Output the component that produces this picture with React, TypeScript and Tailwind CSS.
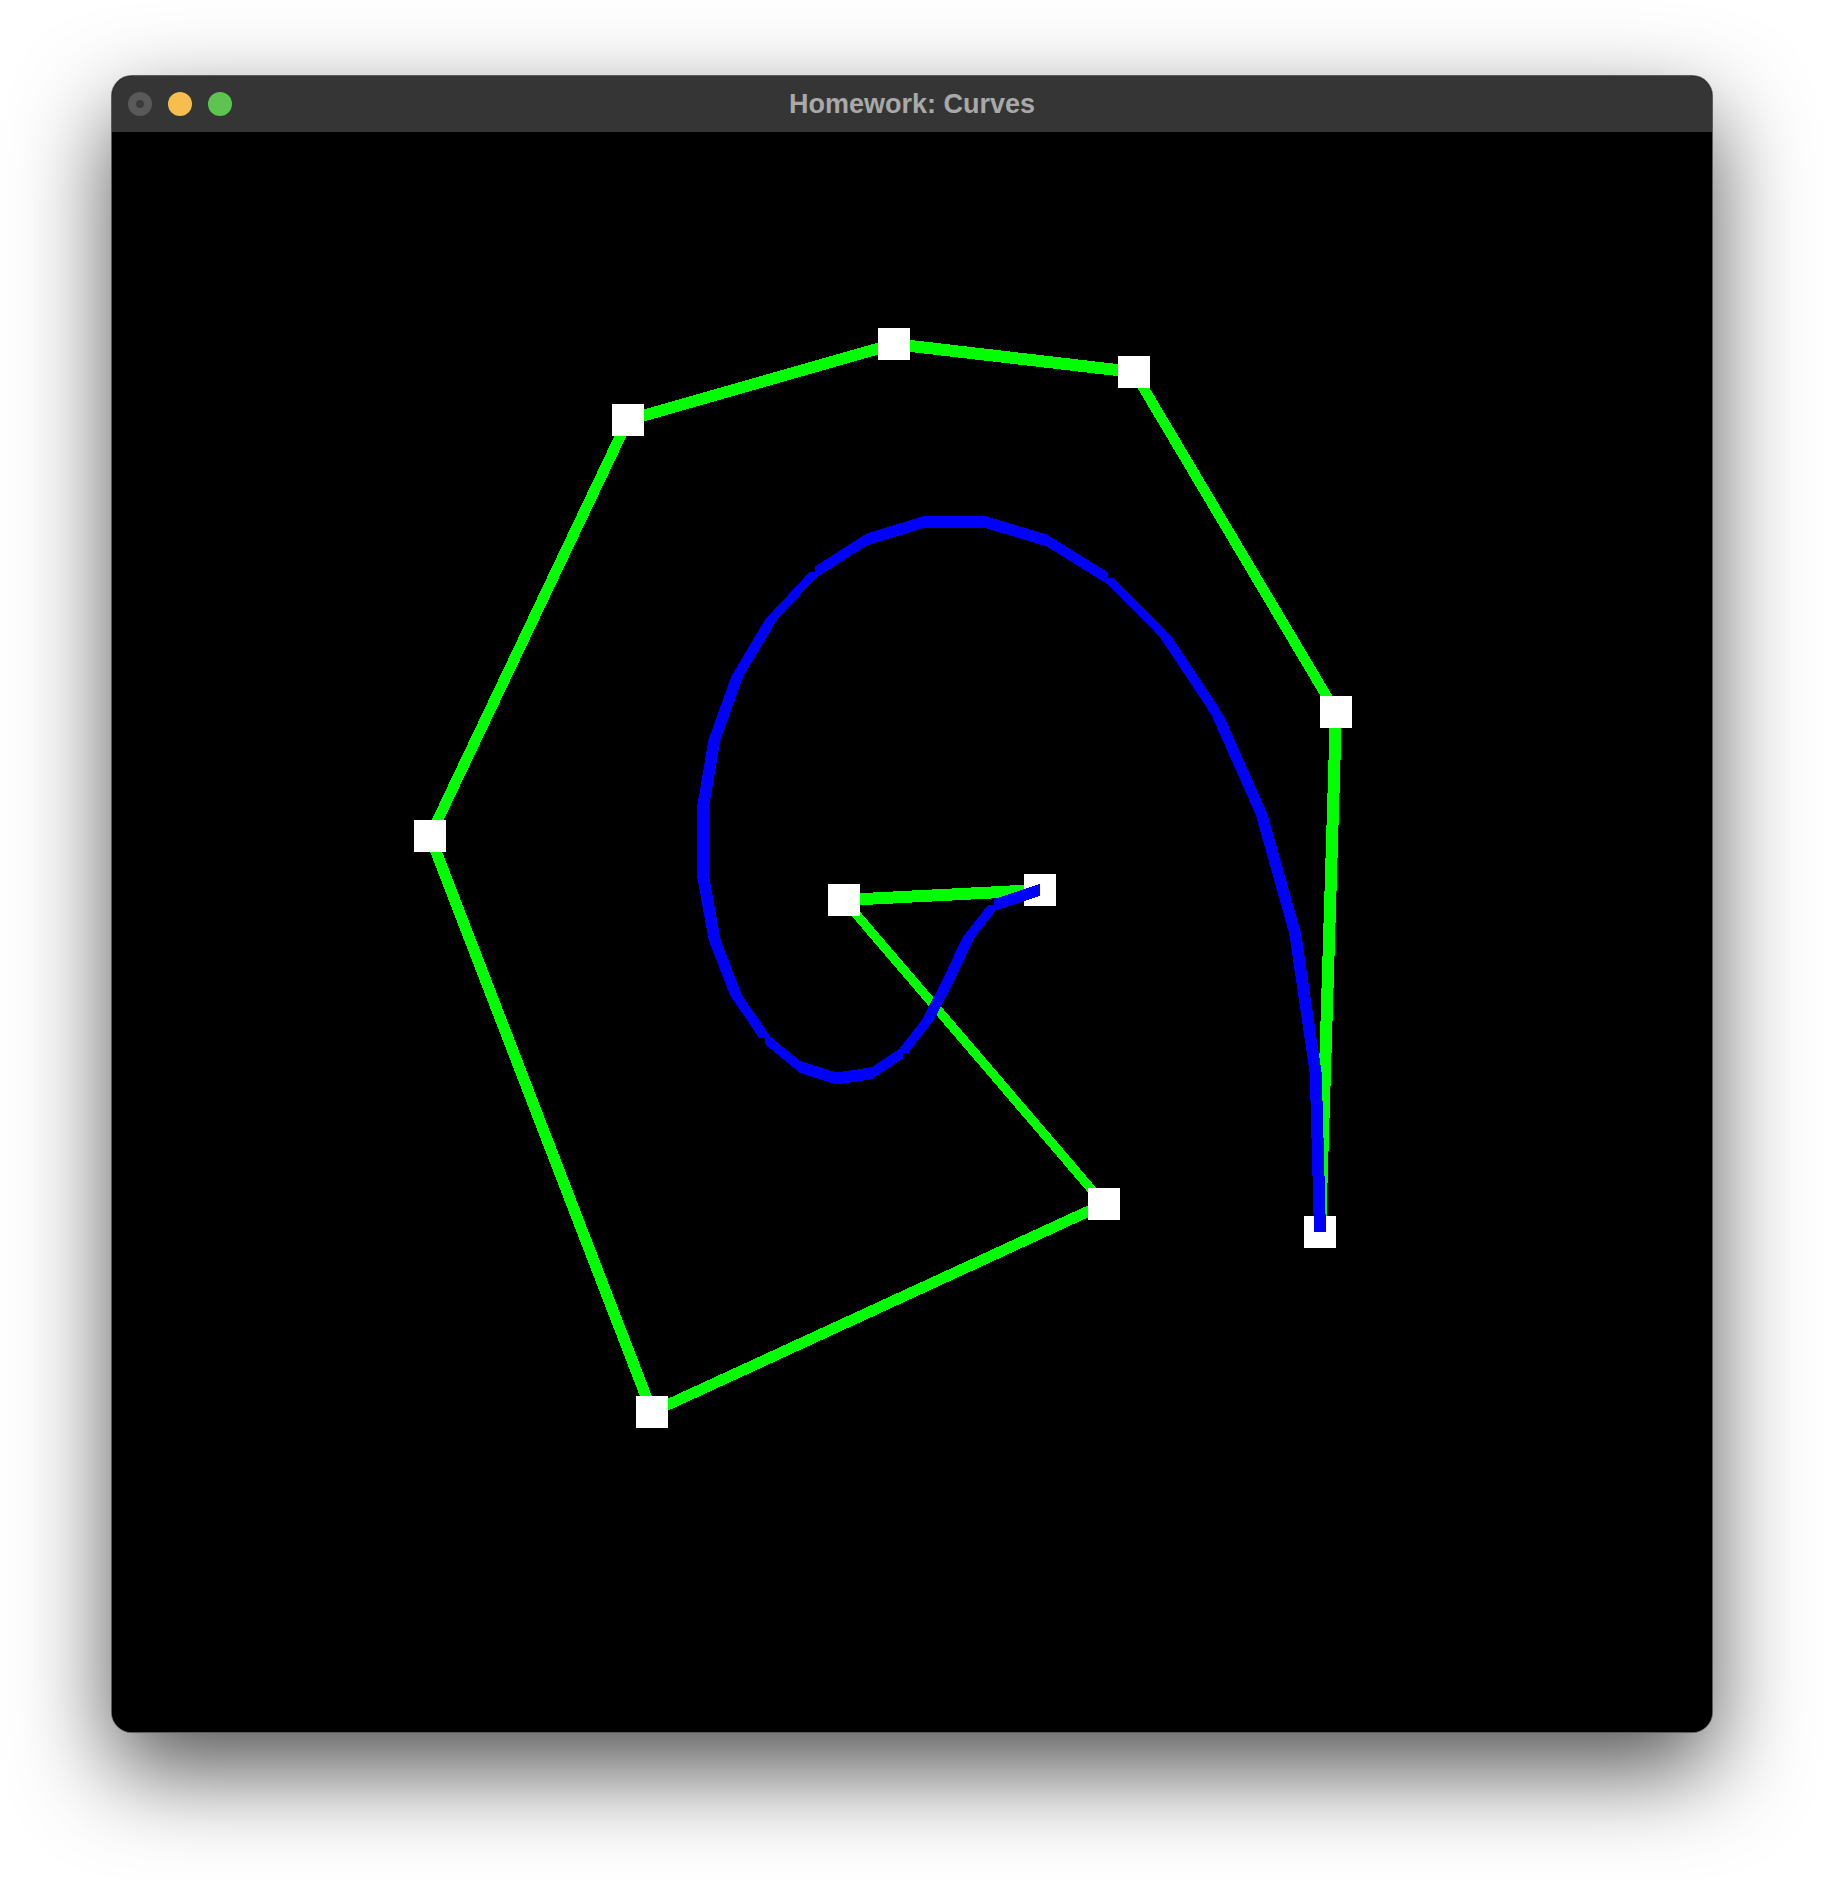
import React from "react";

// control points in canvas pixels (canvas is 1600x1600)
const points: [number, number][] = [
  [928, 758],
  [732, 768],
  [992, 1072],
  [540, 1280],
  [318, 704],
  [516, 288],
  [782, 212],
  [1022, 240],
  [1224, 580],
  [1208, 1100],
];

const STEPS = 28;
const LINE = 12;
const BOX = 32;

function bezier(pts: [number, number][], t: number): [number, number] {
  let work = pts.map((p) => [p[0], p[1]] as [number, number]);
  while (work.length > 1) {
    const next: [number, number][] = [];
    for (let i = 0; i < work.length - 1; i++) {
      next.push([
        work[i][0] + (work[i + 1][0] - work[i][0]) * t,
        work[i][1] + (work[i + 1][1] - work[i][1]) * t,
      ]);
    }
    work = next;
  }
  return work[0];
}

// wide aliased line like glLineWidth: thickness taken along the minor axis
function band(a: [number, number], b: [number, number], w = LINE) {
  const [x1, y1] = a;
  const [x2, y2] = b;
  const h = w / 2;
  if (Math.abs(x2 - x1) >= Math.abs(y2 - y1)) {
    return `${x1},${y1 - h} ${x2},${y2 - h} ${x2},${y2 + h} ${x1},${y1 + h}`;
  }
  return `${x1 - h},${y1} ${x2 - h},${y2} ${x2 + h},${y2} ${x1 + h},${y1}`;
}

const curve = Array.from({ length: STEPS + 1 }, (_, i) => bezier(points, i / STEPS));

function Canvas() {
  return (
    <svg width={1600} height={1600} viewBox="0 0 1600 1600" className="block bg-black" shapeRendering="crispEdges">
      {points.slice(1).map((p, i) => (
        <polygon key={`g${i}`} points={band(points[i], p)} fill="#00ff00" />
      ))}
      {points.map(([x, y], i) => (
        <rect key={`s${i}`} x={x - BOX / 2} y={y - BOX / 2} width={BOX} height={BOX} fill="#ffffff" />
      ))}
      {curve.slice(1).map((p, i) => (
        <polygon key={`b${i}`} points={band(curve[i], p)} fill="#0000ff" />
      ))}
    </svg>
  );
}

function TitleBar() {
  return (
    <div className="relative flex h-[56px] items-center justify-center bg-[#353535]">
      <div className="absolute left-[16px] top-[16px] flex gap-[16px]">
        <div className="flex h-[24px] w-[24px] items-center justify-center rounded-full bg-[#595959]">
          <div className="h-[8px] w-[8px] rounded-full bg-[#3b3b3b]" />
        </div>
        <div className="h-[24px] w-[24px] rounded-full bg-[#f5be4f]" />
        <div className="h-[24px] w-[24px] rounded-full bg-[#5ec451]" />
      </div>
      <span className="text-[27px] font-bold text-[#a9a9a9] [font-family:'Liberation_Sans',Arial,sans-serif]">
        Homework: Curves
      </span>
    </div>
  );
}

export default function App() {
  return (
    <div className="min-h-[1880px] w-[1824px] bg-white pl-[112px] pt-[76px]">
      <div className="w-[1600px] overflow-hidden rounded-[20px] bg-black shadow-[0_0_0_1px_#5c5c5c,0_38px_95px_rgba(0,0,0,0.68)]">
        <TitleBar />
        <Canvas />
      </div>
    </div>
  );
}
